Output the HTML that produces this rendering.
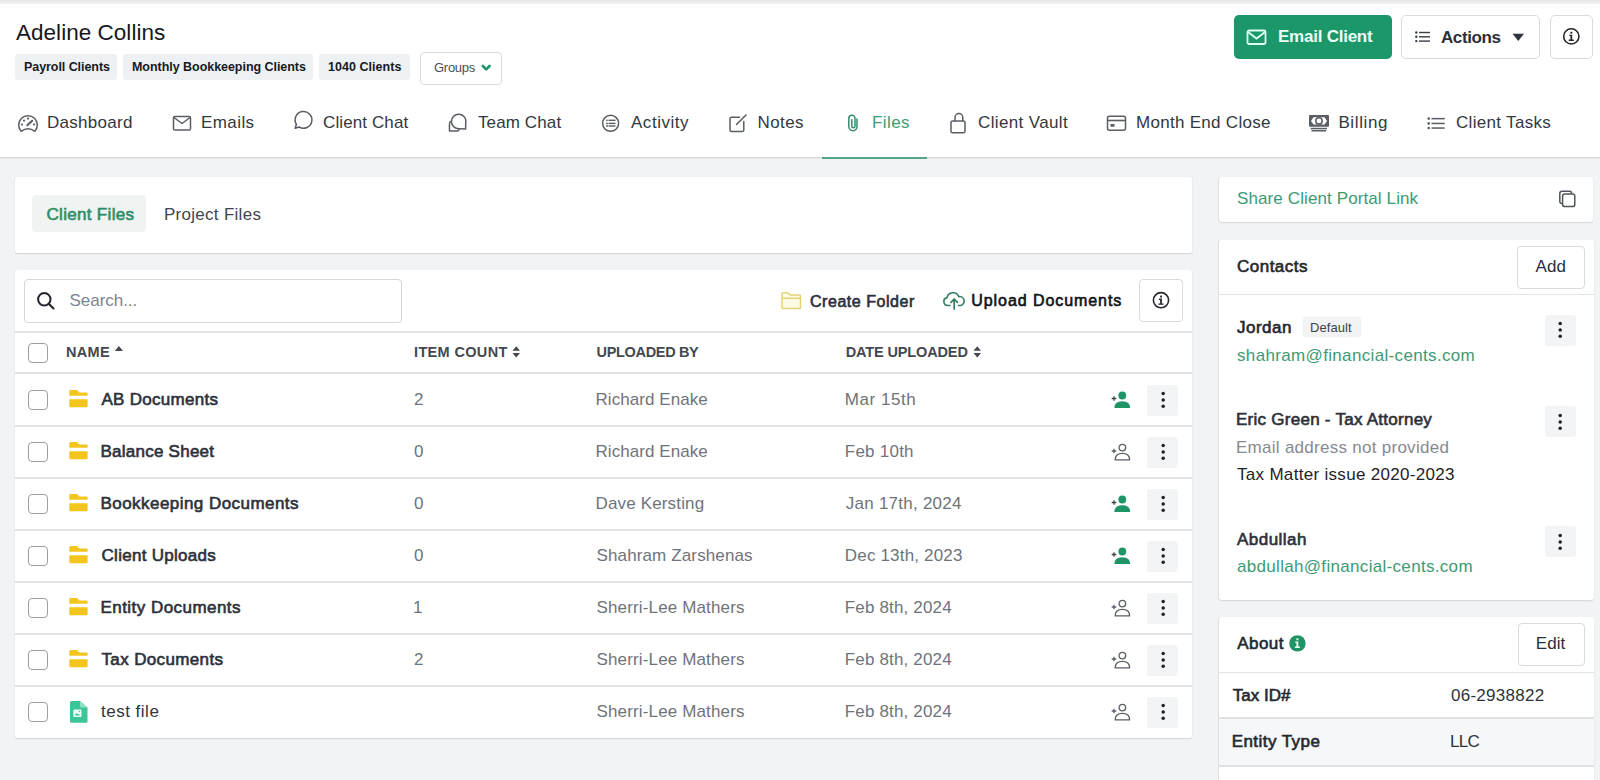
<!DOCTYPE html>
<html><head><meta charset="utf-8"><title>Files - Adeline Collins</title>
<style>
html,body{margin:0;padding:0;width:1600px;height:780px;overflow:hidden;background:#f1f2f4;font-family:"Liberation Sans", sans-serif;}
#root{position:relative;width:1600px;height:780px;overflow:hidden}
</style></head><body><div id="root">
<div style="position:absolute;left:0px;top:8px;width:1600px;height:149px;background:#fff"></div>
<div style="position:absolute;left:0px;top:0px;width:1600px;height:1px;background:#e5e5e5"></div>
<div style="position:absolute;left:0px;top:1px;width:1600px;height:1px;background:#eaeaea"></div>
<div style="position:absolute;left:0px;top:2px;width:1600px;height:1px;background:#eeeeee"></div>
<div style="position:absolute;left:0px;top:3px;width:1600px;height:1px;background:#f2f2f2"></div>
<div style="position:absolute;left:0px;top:4px;width:1600px;height:1px;background:#fcfcfc"></div>
<div style="position:absolute;left:0px;top:5px;width:1600px;height:1px;background:#fefefe"></div>
<div style="position:absolute;left:0px;top:6px;width:1600px;height:1px;background:#fafafa"></div>
<div style="position:absolute;left:0px;top:7px;width:1600px;height:1px;background:#fcfcfc"></div>
<div style="position:absolute;left:0px;top:157px;width:1600px;height:1px;background:#dadbde"></div>
<div style="position:absolute;left:0px;top:158px;width:1600px;height:1px;background:#e6e7ea"></div>
<div style="position:absolute;left:15px;top:54px;width:102px;height:26px;background:#eef1f4;border-radius:3px"></div>
<div style="position:absolute;left:123px;top:54px;width:190px;height:26px;background:#eef1f4;border-radius:3px"></div>
<div style="position:absolute;left:319px;top:54px;width:91px;height:26px;background:#eef1f4;border-radius:3px"></div>
<div style="position:absolute;left:420px;top:52px;width:82px;height:33px;background:#fff;border:1px solid #d9dbde;border-radius:4px;box-sizing:border-box"></div>
<svg style="position:absolute;left:481px;top:64px" width="11" height="8" viewBox="0 0 11 8"><path d="M1.9 2 L5.2 5.4 L8.5 2" fill="none" stroke="#21966a" stroke-width="2.7" stroke-linecap="round" stroke-linejoin="round"/></svg>
<div style="position:absolute;left:1234px;top:15px;width:158px;height:44px;background:#1b976a;border-radius:5px"></div>
<svg style="position:absolute;left:1246px;top:29px" width="21" height="17" viewBox="0 0 21 17"><rect x="1.5" y="1.5" width="18" height="13.5" rx="1.5" fill="none" stroke="#dffff0" stroke-width="1.8"/><path d="M2 3 L10.5 9.5 L19 3" fill="none" stroke="#dffff0" stroke-width="1.8"/></svg>
<div style="position:absolute;left:1401px;top:15px;width:139px;height:44px;background:#fff;border:1px solid #d8dadd;border-radius:5px;box-sizing:border-box"></div>
<svg style="position:absolute;left:1415px;top:31px" width="16" height="12" viewBox="0 0 16 12"><g fill="#3a3e46"><circle cx="1.3" cy="1.5" r="1.2"/><circle cx="1.3" cy="5.8" r="1.2"/><circle cx="1.3" cy="10.1" r="1.2"/><rect x="4" y="0.8" width="11" height="1.4"/><rect x="4" y="5.1" width="11" height="1.4"/><rect x="4" y="9.4" width="11" height="1.4"/></g></svg>
<svg style="position:absolute;left:1512px;top:33px" width="13" height="9" viewBox="0 0 13 9"><path d="M0.5 0.8 L12 0.8 L6.25 8 Z" fill="#2f333b"/></svg>
<div style="position:absolute;left:1550px;top:15px;width:43px;height:44px;background:#fff;border:1px solid #d8dadd;border-radius:5px;box-sizing:border-box"></div>
<svg style="position:absolute;left:1561px;top:26px" width="21" height="21" viewBox="0 0 21 21"><circle cx="10.3" cy="10.4" r="7.6" fill="none" stroke="#25282e" stroke-width="1.6"/><rect x="9.4" y="5.800000000000001" width="1.9" height="1.9" fill="#25282e"/><path d="M8.3 8.8 H11.200000000000001 V13.600000000000001 H12.9 V15.0 H7.700000000000001 V13.600000000000001 H9.4 V10.1 H8.3 Z" fill="#25282e"/></svg>
<div style="position:absolute;left:822px;top:156.5px;width:105px;height:2px;background:#52a884"></div>
<svg style="position:absolute;left:16px;top:113px" width="24" height="21" viewBox="0 0 24 21"><path d="M5.2 18.3 A9.3 9.3 0 1 1 18.8 18.3 Q12 13 5.2 18.3 Z" fill="none" stroke="#595d64" stroke-width="1.5" stroke-linecap="round" stroke-linejoin="round"/><g fill="#595d64"><circle cx="6" cy="11.5" r="1.1"/><circle cx="8" cy="7.6" r="1.1"/><circle cx="12" cy="5.6" r="1.1"/><circle cx="18.1" cy="11.5" r="1.1"/></g><path d="M11.3 12.3 L16.2 7.7" stroke="#595d64" stroke-width="2" stroke-linecap="round"/></svg>
<svg style="position:absolute;left:171px;top:114px" width="22" height="18" viewBox="0 0 22 18"><rect x="2.5" y="2.5" width="17" height="13.5" rx="1.3" fill="none" stroke="#595d64" stroke-width="1.5" stroke-linecap="round" stroke-linejoin="round"/><path d="M3 3.5 L11 9.5 L19 3.5" fill="none" stroke="#595d64" stroke-width="1.5" stroke-linecap="round" stroke-linejoin="round"/></svg>
<svg style="position:absolute;left:292px;top:109px" width="22" height="22" viewBox="0 0 22 22"><path d="M3.2 19.3 L4.4 15.3 A8.4 8.4 0 1 1 7.1 18 Z" fill="none" stroke="#595d64" stroke-width="1.5" stroke-linecap="round" stroke-linejoin="round"/></svg>
<svg style="position:absolute;left:446px;top:112px" width="24" height="22" viewBox="0 0 24 22"><path d="M13.97 16.69 A7.3 7.3 0 1 1 19.75 11.4 L19.6 16.9 Z" fill="none" stroke="#595d64" stroke-width="1.5" stroke-linecap="round" stroke-linejoin="round"/><path d="M4.4 9.4 Q3.3 11.2 3.4 13.6 L3.5 19.1 L11.4 19 Q12.4 18.8 12.9 17.6" fill="none" stroke="#595d64" stroke-width="1.5" stroke-linecap="round" stroke-linejoin="round"/></svg>
<svg style="position:absolute;left:600px;top:112px" width="22" height="22" viewBox="0 0 22 22"><circle cx="10.6" cy="11.3" r="8" fill="none" stroke="#595d64" stroke-width="1.5" stroke-linecap="round" stroke-linejoin="round"/><g fill="#595d64"><circle cx="7" cy="8.3" r="0.9"/><circle cx="7" cy="11.4" r="0.9"/><circle cx="7" cy="14" r="0.9"/><rect x="8.5" y="7.6" width="7" height="1.4"/><rect x="8.5" y="10.7" width="7" height="1.4"/><rect x="8.5" y="13.3" width="7" height="1.4"/></g></svg>
<svg style="position:absolute;left:727px;top:112px" width="22" height="22" viewBox="0 0 22 22"><path d="M12.5 5.2 H4.5 A1.5 1.5 0 0 0 3 6.7 V18 A1.5 1.5 0 0 0 4.5 19.5 H15.3 A1.5 1.5 0 0 0 16.8 18 V9.5" fill="none" stroke="#595d64" stroke-width="1.5" stroke-linecap="round" stroke-linejoin="round"/><path d="M9.5 12.5 L19 3" fill="none" stroke="#595d64" stroke-width="1.5" stroke-linecap="round" stroke-linejoin="round"/></svg>
<svg style="position:absolute;left:845px;top:113px" width="16" height="20" viewBox="0 0 16 20"><path d="M12 6 V13.6 A4.1 4.1 0 0 1 3.8 13.6 V5.4 A3.1 3.1 0 0 1 10 5.4 V13.2 A1.6 1.6 0 0 1 6.8 13.2 V6.6" fill="none" stroke="#2f8a65" stroke-width="1.45" stroke-linecap="round"/></svg>
<svg style="position:absolute;left:948px;top:111px" width="20" height="24" viewBox="0 0 20 24"><path d="M7 9.5 V6.5 A3.9 3.9 0 0 1 14.8 6.5 V9.5" fill="none" stroke="#595d64" stroke-width="1.5" stroke-linecap="round" stroke-linejoin="round"/><rect x="3" y="10" width="14" height="11.8" rx="1.6" fill="none" stroke="#595d64" stroke-width="1.5" stroke-linecap="round" stroke-linejoin="round"/></svg>
<svg style="position:absolute;left:1105px;top:114px" width="23" height="19" viewBox="0 0 23 19"><rect x="2.5" y="2.3" width="18" height="14" rx="2" fill="none" stroke="#595d64" stroke-width="1.5" stroke-linecap="round" stroke-linejoin="round"/><path d="M2.8 6.5 H20.2" stroke="#595d64" stroke-width="1.6"/><rect x="5.5" y="10" width="4" height="2.8" rx="0.6" fill="#595d64"/></svg>
<svg style="position:absolute;left:1307px;top:113px" width="24" height="21" viewBox="0 0 24 21"><rect x="2" y="2" width="20" height="11.8" rx="1" fill="#595d64"/><path d="M6.5 4.2 H17.5 L20 7.9 L17.5 11.6 H6.5 L4 7.9 Z" fill="#fff"/><circle cx="12" cy="7.9" r="3.2" fill="none" stroke="#595d64" stroke-width="1.5"/><rect x="3.7" y="14.8" width="16.3" height="1.5" fill="#595d64"/><rect x="4.5" y="17" width="14.7" height="1.5" fill="#595d64"/></svg>
<svg style="position:absolute;left:1425px;top:115px" width="22" height="16" viewBox="0 0 22 16"><g fill="#595d64"><circle cx="3.7" cy="3.6" r="1.3"/><circle cx="3.7" cy="8.4" r="1.3"/><circle cx="3.7" cy="13" r="1.3"/><rect x="6.5" y="2.9" width="13.2" height="1.5"/><rect x="6.5" y="7.7" width="13.2" height="1.5"/><rect x="6.5" y="12.3" width="13.2" height="1.5"/></g></svg>
<div style="position:absolute;left:0px;top:159px;width:1600px;height:621px;background:#f2f3f5"></div>
<div style="position:absolute;left:15px;top:177px;width:1177px;height:76px;background:#fff;border-radius:2px;box-shadow:0 1px 1.5px rgba(0,0,0,0.13),0 0 1px rgba(0,0,0,0.06)"></div>
<div style="position:absolute;left:32px;top:195px;width:114px;height:37px;background:#eff3f1;border-radius:4px"></div>
<div style="position:absolute;left:15px;top:270px;width:1177px;height:468px;background:#fff;border-radius:2px;box-shadow:0 1px 1.5px rgba(0,0,0,0.13),0 0 1px rgba(0,0,0,0.06)"></div>
<div style="position:absolute;left:24px;top:279px;width:378px;height:44px;background:#fff;border:1px solid #d4d6da;border-radius:4px;box-sizing:border-box"></div>
<svg style="position:absolute;left:35px;top:290px" width="22" height="22" viewBox="0 0 22 22"><circle cx="9.3" cy="9.3" r="6.2" fill="none" stroke="#22252b" stroke-width="2"/><path d="M13.8 13.8 L18.5 18.5" stroke="#22252b" stroke-width="2.1" stroke-linecap="round"/></svg>
<svg style="position:absolute;left:779px;top:290px" width="24" height="21" viewBox="0 0 24 21"><path d="M3 4 Q3 2.8 4.2 2.8 L8.5 2.8 L11.5 5 L20.5 5 Q21.5 5 21.5 6 L21.5 17.5 Q21.5 18.6 20.5 18.6 L4 18.6 Q3 18.6 3 17.5 Z" fill="#fdfbe6" stroke="#e3d377" stroke-width="1.5"/><path d="M3.2 8.2 L21.3 8.2" stroke="#e3d377" stroke-width="1.5"/></svg>
<svg style="position:absolute;left:941px;top:289px" width="26" height="22" viewBox="0 0 26 22"><path d="M9 16.5 H7 A4 4 0 0 1 6 8.6 A6.2 6.2 0 0 1 17.8 7.6 A4.5 4.5 0 0 1 19.5 16.5 H17.5" fill="none" stroke="#2f7d5d" stroke-width="1.6" stroke-linecap="round" stroke-linejoin="round"/><path d="M13.2 20 V10.2 M10 13.3 L13.2 10 L16.4 13.3" fill="none" stroke="#2f7d5d" stroke-width="1.7" stroke-linecap="round" stroke-linejoin="round"/></svg>
<div style="position:absolute;left:1139px;top:279px;width:44px;height:43px;background:#fff;border:1px solid #d8dadd;border-radius:4px;box-sizing:border-box"></div>
<svg style="position:absolute;left:1151px;top:290px" width="21" height="21" viewBox="0 0 21 21"><circle cx="10" cy="10.2" r="7.6" fill="none" stroke="#25282e" stroke-width="1.6"/><rect x="9.1" y="5.6" width="1.9" height="1.9" fill="#25282e"/><path d="M8 8.6 H10.9 V13.399999999999999 H12.6 V14.799999999999999 H7.4 V13.399999999999999 H9.1 V9.899999999999999 H8 Z" fill="#25282e"/></svg>
<div style="position:absolute;left:15px;top:331px;width:1177px;height:2px;background:#e2e3e6"></div>
<div style="position:absolute;left:28px;top:343px;width:20px;height:20px;background:#fff;border:1.2px solid #9a9ea4;border-radius:4px;box-sizing:border-box"></div>
<div style="position:absolute;left:15px;top:372px;width:1177px;height:2px;background:#e2e3e5"></div>
<svg style="position:absolute;left:114px;top:345px" width="10" height="7" viewBox="0 0 10 7"><path d="M0.8 6 L4.9 1 L9 6 Z" fill="#44484f"/></svg>
<svg style="position:absolute;left:512.3px;top:345.8px" width="9" height="12" viewBox="0 0 9 12"><path d="M0.5 4.8 L4.25 0.3 L8 4.8 Z M0.5 7 L4.25 11.5 L8 7 Z" fill="#44484f"/></svg>
<svg style="position:absolute;left:973.3px;top:345.8px" width="9" height="12" viewBox="0 0 9 12"><path d="M0.5 4.8 L4.25 0.3 L8 4.8 Z M0.5 7 L4.25 11.5 L8 7 Z" fill="#44484f"/></svg>
<div style="position:absolute;left:15px;top:425px;width:1177px;height:2px;background:#e2e3e5"></div>
<div style="position:absolute;left:28px;top:390px;width:20px;height:20px;background:#fff;border:1.2px solid #9a9ea4;border-radius:4px;box-sizing:border-box"></div>
<svg style="position:absolute;left:69px;top:390px" width="19" height="18" viewBox="0 0 19 18"><path d="M0.3 1.2 Q0.3 0 1.5 0 L8 0 L10.3 2.5 L17.7 2.5 Q18.6 2.5 18.6 3.4 L18.6 5.8 L0.3 5.8 Z" fill="#f4c51c"/><path d="M0.3 9.3 L18.6 9.3 L18.6 16.2 Q18.6 17.2 17.6 17.2 L1.3 17.2 Q0.3 17.2 0.3 16.2 Z" fill="#f4c51c"/></svg>
<svg style="position:absolute;left:1110px;top:390px" width="24" height="20" viewBox="0 0 24 20"><g transform="translate(4,0)"><circle cx="8.3" cy="5.5" r="3.9" fill="#1f9466"/><path d="M0.3 18.1 Q0.3 11.2 8.3 11.2 Q16.2 11.2 16.2 18.1 Z" fill="#1f9466"/><path d="M-2.3 8.5 H2.3 M0 6.2 V10.8" stroke="#3e4a45" stroke-width="1.3"/></g></svg>
<div style="position:absolute;left:1147.0px;top:384.5px;width:31px;height:31px;background:#f3f4f5;border-radius:3px"></div>
<svg style="position:absolute;left:1146.5px;top:384px" width="32" height="32" viewBox="0 0 32 32"><g fill="#1f2226"><circle cx="16.2" cy="9.6" r="1.75"/><circle cx="16.2" cy="15.9" r="1.75"/><circle cx="16.2" cy="22.2" r="1.75"/></g></svg>
<div style="position:absolute;left:15px;top:477px;width:1177px;height:2px;background:#e2e3e5"></div>
<div style="position:absolute;left:28px;top:442px;width:20px;height:20px;background:#fff;border:1.2px solid #9a9ea4;border-radius:4px;box-sizing:border-box"></div>
<svg style="position:absolute;left:69px;top:442px" width="19" height="18" viewBox="0 0 19 18"><path d="M0.3 1.2 Q0.3 0 1.5 0 L8 0 L10.3 2.5 L17.7 2.5 Q18.6 2.5 18.6 3.4 L18.6 5.8 L0.3 5.8 Z" fill="#f4c51c"/><path d="M0.3 9.3 L18.6 9.3 L18.6 16.2 Q18.6 17.2 17.6 17.2 L1.3 17.2 Q0.3 17.2 0.3 16.2 Z" fill="#f4c51c"/></svg>
<svg style="position:absolute;left:1110px;top:442px" width="24" height="20" viewBox="0 0 24 20"><g transform="translate(4,0.5)"><circle cx="8.4" cy="5.1" r="3.3" fill="none" stroke="#5a5e66" stroke-width="1.3"/><path d="M1.2 17.4 Q1.2 10.9 8.4 10.9 Q15.6 10.9 15.6 17.4 Z" fill="none" stroke="#5a5e66" stroke-width="1.3" stroke-linejoin="round"/><path d="M-2.3 8.5 H2.3 M0 6.2 V10.8" stroke="#5a5e66" stroke-width="1.3"/></g></svg>
<div style="position:absolute;left:1147.0px;top:436.5px;width:31px;height:31px;background:#f3f4f5;border-radius:3px"></div>
<svg style="position:absolute;left:1146.5px;top:436px" width="32" height="32" viewBox="0 0 32 32"><g fill="#1f2226"><circle cx="16.2" cy="9.6" r="1.75"/><circle cx="16.2" cy="15.9" r="1.75"/><circle cx="16.2" cy="22.2" r="1.75"/></g></svg>
<div style="position:absolute;left:15px;top:529px;width:1177px;height:2px;background:#e2e3e5"></div>
<div style="position:absolute;left:28px;top:494px;width:20px;height:20px;background:#fff;border:1.2px solid #9a9ea4;border-radius:4px;box-sizing:border-box"></div>
<svg style="position:absolute;left:69px;top:494px" width="19" height="18" viewBox="0 0 19 18"><path d="M0.3 1.2 Q0.3 0 1.5 0 L8 0 L10.3 2.5 L17.7 2.5 Q18.6 2.5 18.6 3.4 L18.6 5.8 L0.3 5.8 Z" fill="#f4c51c"/><path d="M0.3 9.3 L18.6 9.3 L18.6 16.2 Q18.6 17.2 17.6 17.2 L1.3 17.2 Q0.3 17.2 0.3 16.2 Z" fill="#f4c51c"/></svg>
<svg style="position:absolute;left:1110px;top:494px" width="24" height="20" viewBox="0 0 24 20"><g transform="translate(4,0)"><circle cx="8.3" cy="5.5" r="3.9" fill="#1f9466"/><path d="M0.3 18.1 Q0.3 11.2 8.3 11.2 Q16.2 11.2 16.2 18.1 Z" fill="#1f9466"/><path d="M-2.3 8.5 H2.3 M0 6.2 V10.8" stroke="#3e4a45" stroke-width="1.3"/></g></svg>
<div style="position:absolute;left:1147.0px;top:488.5px;width:31px;height:31px;background:#f3f4f5;border-radius:3px"></div>
<svg style="position:absolute;left:1146.5px;top:488px" width="32" height="32" viewBox="0 0 32 32"><g fill="#1f2226"><circle cx="16.2" cy="9.6" r="1.75"/><circle cx="16.2" cy="15.9" r="1.75"/><circle cx="16.2" cy="22.2" r="1.75"/></g></svg>
<div style="position:absolute;left:15px;top:581px;width:1177px;height:2px;background:#e2e3e5"></div>
<div style="position:absolute;left:28px;top:546px;width:20px;height:20px;background:#fff;border:1.2px solid #9a9ea4;border-radius:4px;box-sizing:border-box"></div>
<svg style="position:absolute;left:69px;top:546px" width="19" height="18" viewBox="0 0 19 18"><path d="M0.3 1.2 Q0.3 0 1.5 0 L8 0 L10.3 2.5 L17.7 2.5 Q18.6 2.5 18.6 3.4 L18.6 5.8 L0.3 5.8 Z" fill="#f4c51c"/><path d="M0.3 9.3 L18.6 9.3 L18.6 16.2 Q18.6 17.2 17.6 17.2 L1.3 17.2 Q0.3 17.2 0.3 16.2 Z" fill="#f4c51c"/></svg>
<svg style="position:absolute;left:1110px;top:546px" width="24" height="20" viewBox="0 0 24 20"><g transform="translate(4,0)"><circle cx="8.3" cy="5.5" r="3.9" fill="#1f9466"/><path d="M0.3 18.1 Q0.3 11.2 8.3 11.2 Q16.2 11.2 16.2 18.1 Z" fill="#1f9466"/><path d="M-2.3 8.5 H2.3 M0 6.2 V10.8" stroke="#3e4a45" stroke-width="1.3"/></g></svg>
<div style="position:absolute;left:1147.0px;top:540.5px;width:31px;height:31px;background:#f3f4f5;border-radius:3px"></div>
<svg style="position:absolute;left:1146.5px;top:540px" width="32" height="32" viewBox="0 0 32 32"><g fill="#1f2226"><circle cx="16.2" cy="9.6" r="1.75"/><circle cx="16.2" cy="15.9" r="1.75"/><circle cx="16.2" cy="22.2" r="1.75"/></g></svg>
<div style="position:absolute;left:15px;top:633px;width:1177px;height:2px;background:#e2e3e5"></div>
<div style="position:absolute;left:28px;top:598px;width:20px;height:20px;background:#fff;border:1.2px solid #9a9ea4;border-radius:4px;box-sizing:border-box"></div>
<svg style="position:absolute;left:69px;top:598px" width="19" height="18" viewBox="0 0 19 18"><path d="M0.3 1.2 Q0.3 0 1.5 0 L8 0 L10.3 2.5 L17.7 2.5 Q18.6 2.5 18.6 3.4 L18.6 5.8 L0.3 5.8 Z" fill="#f4c51c"/><path d="M0.3 9.3 L18.6 9.3 L18.6 16.2 Q18.6 17.2 17.6 17.2 L1.3 17.2 Q0.3 17.2 0.3 16.2 Z" fill="#f4c51c"/></svg>
<svg style="position:absolute;left:1110px;top:598px" width="24" height="20" viewBox="0 0 24 20"><g transform="translate(4,0.5)"><circle cx="8.4" cy="5.1" r="3.3" fill="none" stroke="#5a5e66" stroke-width="1.3"/><path d="M1.2 17.4 Q1.2 10.9 8.4 10.9 Q15.6 10.9 15.6 17.4 Z" fill="none" stroke="#5a5e66" stroke-width="1.3" stroke-linejoin="round"/><path d="M-2.3 8.5 H2.3 M0 6.2 V10.8" stroke="#5a5e66" stroke-width="1.3"/></g></svg>
<div style="position:absolute;left:1147.0px;top:592.5px;width:31px;height:31px;background:#f3f4f5;border-radius:3px"></div>
<svg style="position:absolute;left:1146.5px;top:592px" width="32" height="32" viewBox="0 0 32 32"><g fill="#1f2226"><circle cx="16.2" cy="9.6" r="1.75"/><circle cx="16.2" cy="15.9" r="1.75"/><circle cx="16.2" cy="22.2" r="1.75"/></g></svg>
<div style="position:absolute;left:15px;top:685px;width:1177px;height:2px;background:#e2e3e5"></div>
<div style="position:absolute;left:28px;top:650px;width:20px;height:20px;background:#fff;border:1.2px solid #9a9ea4;border-radius:4px;box-sizing:border-box"></div>
<svg style="position:absolute;left:69px;top:650px" width="19" height="18" viewBox="0 0 19 18"><path d="M0.3 1.2 Q0.3 0 1.5 0 L8 0 L10.3 2.5 L17.7 2.5 Q18.6 2.5 18.6 3.4 L18.6 5.8 L0.3 5.8 Z" fill="#f4c51c"/><path d="M0.3 9.3 L18.6 9.3 L18.6 16.2 Q18.6 17.2 17.6 17.2 L1.3 17.2 Q0.3 17.2 0.3 16.2 Z" fill="#f4c51c"/></svg>
<svg style="position:absolute;left:1110px;top:650px" width="24" height="20" viewBox="0 0 24 20"><g transform="translate(4,0.5)"><circle cx="8.4" cy="5.1" r="3.3" fill="none" stroke="#5a5e66" stroke-width="1.3"/><path d="M1.2 17.4 Q1.2 10.9 8.4 10.9 Q15.6 10.9 15.6 17.4 Z" fill="none" stroke="#5a5e66" stroke-width="1.3" stroke-linejoin="round"/><path d="M-2.3 8.5 H2.3 M0 6.2 V10.8" stroke="#5a5e66" stroke-width="1.3"/></g></svg>
<div style="position:absolute;left:1147.0px;top:644.5px;width:31px;height:31px;background:#f3f4f5;border-radius:3px"></div>
<svg style="position:absolute;left:1146.5px;top:644px" width="32" height="32" viewBox="0 0 32 32"><g fill="#1f2226"><circle cx="16.2" cy="9.6" r="1.75"/><circle cx="16.2" cy="15.9" r="1.75"/><circle cx="16.2" cy="22.2" r="1.75"/></g></svg>
<div style="position:absolute;left:28px;top:702px;width:20px;height:20px;background:#fff;border:1.2px solid #9a9ea4;border-radius:4px;box-sizing:border-box"></div>
<svg style="position:absolute;left:70.3px;top:701px" width="18" height="22" viewBox="0 0 18 22"><path d="M1.5 0 L10 0 L17.5 6.5 L17.5 20.3 Q17.5 21.8 16 21.8 L1.5 21.8 Q0 21.8 0 20.3 L0 1.5 Q0 0 1.5 0 Z" fill="#3cc597"/><path d="M10 0 L10 5 Q10 6.5 11.5 6.5 L17.5 6.5 Z" fill="#8fe3c4"/><rect x="3.3" y="8.6" width="8.2" height="7.4" rx="0.8" fill="#e8fff6"/><path d="M4.8 14.5 L6.5 12 L7.8 13.5 L8.8 12.8 L10 14.5 Z" fill="#3cc597"/><circle cx="9.6" cy="10.4" r="0.7" fill="#3cc597"/></svg>
<svg style="position:absolute;left:1110px;top:702px" width="24" height="20" viewBox="0 0 24 20"><g transform="translate(4,0.5)"><circle cx="8.4" cy="5.1" r="3.3" fill="none" stroke="#5a5e66" stroke-width="1.3"/><path d="M1.2 17.4 Q1.2 10.9 8.4 10.9 Q15.6 10.9 15.6 17.4 Z" fill="none" stroke="#5a5e66" stroke-width="1.3" stroke-linejoin="round"/><path d="M-2.3 8.5 H2.3 M0 6.2 V10.8" stroke="#5a5e66" stroke-width="1.3"/></g></svg>
<div style="position:absolute;left:1147.0px;top:696.5px;width:31px;height:31px;background:#f3f4f5;border-radius:3px"></div>
<svg style="position:absolute;left:1146.5px;top:696px" width="32" height="32" viewBox="0 0 32 32"><g fill="#1f2226"><circle cx="16.2" cy="9.6" r="1.75"/><circle cx="16.2" cy="15.9" r="1.75"/><circle cx="16.2" cy="22.2" r="1.75"/></g></svg>
<div style="position:absolute;left:1219px;top:177px;width:374px;height:45px;background:#fff;border-radius:3px;box-shadow:0 1px 1.5px rgba(0,0,0,0.12),-1px 0 0 #e4e5e8"></div>
<svg style="position:absolute;left:1557px;top:189px" width="20" height="20" viewBox="0 0 20 20"><path d="M5 14.5 Q2.8 14.5 2.8 12.3 V4.5 Q2.8 2.3 5 2.3 H12.6 Q14.5 2.3 14.8 4.6" fill="none" stroke="#50545b" stroke-width="1.5"/><rect x="5.6" y="5" width="12.2" height="12.6" rx="2.2" fill="none" stroke="#50545b" stroke-width="1.5"/></svg>
<div style="position:absolute;left:1219px;top:240px;width:375px;height:360px;background:#fff;border-radius:3px;box-shadow:0 1px 1.5px rgba(0,0,0,0.12),-1px 0 0 #e4e5e8"></div>
<div style="position:absolute;left:1517px;top:246px;width:68px;height:43px;background:#fff;border:1px solid #d8dadd;border-radius:4px;box-sizing:border-box"></div>
<div style="position:absolute;left:1219px;top:293.5px;width:375px;height:1.5px;background:#e3e4e7"></div>
<div style="position:absolute;left:1302.5px;top:316.5px;width:58.5px;height:20.5px;background:#f2f3f4;border-radius:4px;box-shadow:0 0 1.5px rgba(0,0,0,0.08)"></div>
<div style="position:absolute;left:1544.5px;top:314.5px;width:31px;height:31px;background:#f3f4f5;border-radius:3px"></div>
<svg style="position:absolute;left:1544px;top:314px" width="32" height="32" viewBox="0 0 32 32"><g fill="#1f2226"><circle cx="16.2" cy="9.6" r="1.75"/><circle cx="16.2" cy="15.9" r="1.75"/><circle cx="16.2" cy="22.2" r="1.75"/></g></svg>
<div style="position:absolute;left:1544.5px;top:406.0px;width:31px;height:31px;background:#f3f4f5;border-radius:3px"></div>
<svg style="position:absolute;left:1544px;top:405.5px" width="32" height="32" viewBox="0 0 32 32"><g fill="#1f2226"><circle cx="16.2" cy="9.6" r="1.75"/><circle cx="16.2" cy="15.9" r="1.75"/><circle cx="16.2" cy="22.2" r="1.75"/></g></svg>
<div style="position:absolute;left:1544.5px;top:526.0px;width:31px;height:31px;background:#f3f4f5;border-radius:3px"></div>
<svg style="position:absolute;left:1544px;top:525.5px" width="32" height="32" viewBox="0 0 32 32"><g fill="#1f2226"><circle cx="16.2" cy="9.6" r="1.75"/><circle cx="16.2" cy="15.9" r="1.75"/><circle cx="16.2" cy="22.2" r="1.75"/></g></svg>
<div style="position:absolute;left:1219px;top:617px;width:375px;height:175px;background:#fff;border-radius:3px;box-shadow:0 1px 1.5px rgba(0,0,0,0.12),-1px 0 0 #e4e5e8"></div>
<svg style="position:absolute;left:1287px;top:633px" width="21" height="21" viewBox="0 0 21 21"><circle cx="10.4" cy="10.4" r="8.2" fill="#1f9466"/><rect x="9.5" y="5.3" width="1.9" height="1.9" fill="#e6fff3"/><path d="M8.3 8.6 H11.3 V13.6 H12.9 V15 H7.8 V13.6 H9.4 V9.9 H8.3 Z" fill="#e6fff3"/></svg>
<div style="position:absolute;left:1518px;top:622.5px;width:67px;height:43px;background:#fff;border:1px solid #d8dadd;border-radius:4px;box-sizing:border-box"></div>
<div style="position:absolute;left:1219px;top:671.5px;width:375px;height:1.5px;background:#e3e4e7"></div>
<div style="position:absolute;left:1219px;top:717px;width:375px;height:2px;background:#e0e1e4"></div>
<div style="position:absolute;left:1219px;top:719px;width:375px;height:46px;background:#f6f7f9"></div>
<div style="position:absolute;left:1219px;top:765px;width:375px;height:2px;background:#e0e1e4"></div>
<div style="position:absolute;left:16px;top:22.45px;font-size:22.5px;line-height:22.5px;font-weight:400;color:#16181d;letter-spacing:0.030px;white-space:nowrap;">Adeline Collins</div>
<div style="position:absolute;left:24px;top:61.22px;font-size:12.5px;line-height:12.5px;font-weight:700;color:#17191e;letter-spacing:-0.063px;white-space:nowrap;">Payroll Clients</div>
<div style="position:absolute;left:132px;top:61.22px;font-size:12.5px;line-height:12.5px;font-weight:700;color:#17191e;letter-spacing:-0.041px;white-space:nowrap;">Monthly Bookkeeping Clients</div>
<div style="position:absolute;left:328px;top:61.22px;font-size:12.5px;line-height:12.5px;font-weight:700;color:#17191e;letter-spacing:0.045px;white-space:nowrap;">1040 Clients</div>
<div style="position:absolute;left:434px;top:61.30px;font-size:13px;line-height:13px;font-weight:400;color:#4a4e56;letter-spacing:-0.266px;white-space:nowrap;">Groups</div>
<div style="position:absolute;left:1278px;top:28.31px;font-size:17px;line-height:17px;font-weight:700;color:#e9fff5;letter-spacing:-0.240px;white-space:nowrap;">Email Client</div>
<div style="position:absolute;left:1441px;top:28.91px;font-size:17px;line-height:17px;font-weight:700;color:#2b2f38;letter-spacing:-0.414px;white-space:nowrap;">Actions</div>
<div style="position:absolute;left:47px;top:114.11px;font-size:17px;line-height:17px;font-weight:400;color:#33373f;letter-spacing:0.286px;white-space:nowrap;">Dashboard</div>
<div style="position:absolute;left:201px;top:114.11px;font-size:17px;line-height:17px;font-weight:400;color:#33373f;letter-spacing:0.418px;white-space:nowrap;">Emails</div>
<div style="position:absolute;left:323px;top:114.11px;font-size:17px;line-height:17px;font-weight:400;color:#33373f;letter-spacing:0.113px;white-space:nowrap;">Client Chat</div>
<div style="position:absolute;left:478px;top:114.11px;font-size:17px;line-height:17px;font-weight:400;color:#33373f;letter-spacing:0.115px;white-space:nowrap;">Team Chat</div>
<div style="position:absolute;left:631px;top:114.11px;font-size:17px;line-height:17px;font-weight:400;color:#33373f;letter-spacing:0.523px;white-space:nowrap;">Activity</div>
<div style="position:absolute;left:757.5px;top:114.11px;font-size:17px;line-height:17px;font-weight:400;color:#33373f;letter-spacing:0.398px;white-space:nowrap;">Notes</div>
<div style="position:absolute;left:872px;top:114.11px;font-size:17px;line-height:17px;font-weight:400;color:#3a9e78;letter-spacing:0.402px;white-space:nowrap;">Files</div>
<div style="position:absolute;left:978px;top:114.11px;font-size:17px;line-height:17px;font-weight:400;color:#33373f;letter-spacing:0.368px;white-space:nowrap;">Client Vault</div>
<div style="position:absolute;left:1136px;top:114.11px;font-size:17px;line-height:17px;font-weight:400;color:#33373f;letter-spacing:0.289px;white-space:nowrap;">Month End Close</div>
<div style="position:absolute;left:1338.4px;top:114.11px;font-size:17px;line-height:17px;font-weight:400;color:#33373f;letter-spacing:0.617px;white-space:nowrap;">Billing</div>
<div style="position:absolute;left:1456px;top:114.11px;font-size:17px;line-height:17px;font-weight:400;color:#33373f;letter-spacing:0.314px;white-space:nowrap;">Client Tasks</div>
<div style="position:absolute;left:46.5px;top:205.61px;font-size:17px;line-height:17px;font-weight:400;color:#2e8e66;letter-spacing:0.311px;white-space:nowrap;-webkit-text-stroke:0.62px #2e8e66;">Client Files</div>
<div style="position:absolute;left:164px;top:205.61px;font-size:17px;line-height:17px;font-weight:400;color:#41454d;letter-spacing:0.281px;white-space:nowrap;">Project Files</div>
<div style="position:absolute;left:69.5px;top:292.01px;font-size:17px;line-height:17px;font-weight:400;color:#80848b;letter-spacing:-0.039px;white-space:nowrap;">Search...</div>
<div style="position:absolute;left:810px;top:293.86px;font-size:16px;line-height:16px;font-weight:400;color:#2b2f38;letter-spacing:0.542px;white-space:nowrap;-webkit-text-stroke:0.62px #2b2f38;">Create Folder</div>
<div style="position:absolute;left:971.3px;top:292.86px;font-size:16px;line-height:16px;font-weight:400;color:#121418;letter-spacing:0.929px;white-space:nowrap;-webkit-text-stroke:0.62px #121418;">Upload Documents</div>
<div style="position:absolute;left:66px;top:344.73px;font-size:14.5px;line-height:14.5px;font-weight:700;color:#44484f;letter-spacing:0.326px;white-space:nowrap;">NAME</div>
<div style="position:absolute;left:414px;top:344.73px;font-size:14.5px;line-height:14.5px;font-weight:700;color:#44484f;letter-spacing:0.349px;white-space:nowrap;">ITEM COUNT</div>
<div style="position:absolute;left:596.6px;top:344.73px;font-size:14.5px;line-height:14.5px;font-weight:700;color:#44484f;letter-spacing:-0.336px;white-space:nowrap;">UPLOADED BY</div>
<div style="position:absolute;left:845.7px;top:344.73px;font-size:14.5px;line-height:14.5px;font-weight:700;color:#44484f;letter-spacing:-0.135px;white-space:nowrap;">DATE UPLOADED</div>
<div style="position:absolute;left:101.5px;top:390.81px;font-size:17px;line-height:17px;font-weight:400;color:#2d313a;letter-spacing:0.284px;white-space:nowrap;-webkit-text-stroke:0.62px #2d313a;">AB Documents</div>
<div style="position:absolute;left:414px;top:390.81px;font-size:17px;line-height:17px;font-weight:400;color:#6f737a;letter-spacing:0.000px;white-space:nowrap;">2</div>
<div style="position:absolute;left:595.5px;top:390.81px;font-size:17px;line-height:17px;font-weight:400;color:#6f737a;letter-spacing:0.063px;white-space:nowrap;">Richard Enake</div>
<div style="position:absolute;left:844.8px;top:390.81px;font-size:17px;line-height:17px;font-weight:400;color:#6f737a;letter-spacing:0.553px;white-space:nowrap;">Mar 15th</div>
<div style="position:absolute;left:100.5px;top:442.81px;font-size:17px;line-height:17px;font-weight:400;color:#2d313a;letter-spacing:0.245px;white-space:nowrap;-webkit-text-stroke:0.62px #2d313a;">Balance Sheet</div>
<div style="position:absolute;left:414px;top:442.81px;font-size:17px;line-height:17px;font-weight:400;color:#6f737a;letter-spacing:0.000px;white-space:nowrap;">0</div>
<div style="position:absolute;left:595.5px;top:442.81px;font-size:17px;line-height:17px;font-weight:400;color:#6f737a;letter-spacing:0.063px;white-space:nowrap;">Richard Enake</div>
<div style="position:absolute;left:844.8px;top:442.81px;font-size:17px;line-height:17px;font-weight:400;color:#6f737a;letter-spacing:0.236px;white-space:nowrap;">Feb 10th</div>
<div style="position:absolute;left:100.5px;top:494.81px;font-size:17px;line-height:17px;font-weight:400;color:#2d313a;letter-spacing:0.450px;white-space:nowrap;-webkit-text-stroke:0.62px #2d313a;">Bookkeeping Documents</div>
<div style="position:absolute;left:414px;top:494.81px;font-size:17px;line-height:17px;font-weight:400;color:#6f737a;letter-spacing:0.000px;white-space:nowrap;">0</div>
<div style="position:absolute;left:595.5px;top:494.81px;font-size:17px;line-height:17px;font-weight:400;color:#6f737a;letter-spacing:0.157px;white-space:nowrap;">Dave Kersting</div>
<div style="position:absolute;left:845.8px;top:494.81px;font-size:17px;line-height:17px;font-weight:400;color:#6f737a;letter-spacing:0.244px;white-space:nowrap;">Jan 17th, 2024</div>
<div style="position:absolute;left:101.5px;top:546.81px;font-size:17px;line-height:17px;font-weight:400;color:#2d313a;letter-spacing:0.288px;white-space:nowrap;-webkit-text-stroke:0.62px #2d313a;">Client Uploads</div>
<div style="position:absolute;left:414px;top:546.81px;font-size:17px;line-height:17px;font-weight:400;color:#6f737a;letter-spacing:0.000px;white-space:nowrap;">0</div>
<div style="position:absolute;left:596.5px;top:546.81px;font-size:17px;line-height:17px;font-weight:400;color:#6f737a;letter-spacing:0.130px;white-space:nowrap;">Shahram Zarshenas</div>
<div style="position:absolute;left:844.8px;top:546.81px;font-size:17px;line-height:17px;font-weight:400;color:#6f737a;letter-spacing:0.181px;white-space:nowrap;">Dec 13th, 2023</div>
<div style="position:absolute;left:100.5px;top:598.81px;font-size:17px;line-height:17px;font-weight:400;color:#2d313a;letter-spacing:0.452px;white-space:nowrap;-webkit-text-stroke:0.62px #2d313a;">Entity Documents</div>
<div style="position:absolute;left:413px;top:598.81px;font-size:17px;line-height:17px;font-weight:400;color:#6f737a;letter-spacing:0.000px;white-space:nowrap;">1</div>
<div style="position:absolute;left:596.5px;top:598.81px;font-size:17px;line-height:17px;font-weight:400;color:#6f737a;letter-spacing:0.147px;white-space:nowrap;">Sherri-Lee Mathers</div>
<div style="position:absolute;left:844.8px;top:598.81px;font-size:17px;line-height:17px;font-weight:400;color:#6f737a;letter-spacing:0.162px;white-space:nowrap;">Feb 8th, 2024</div>
<div style="position:absolute;left:101.5px;top:650.81px;font-size:17px;line-height:17px;font-weight:400;color:#2d313a;letter-spacing:0.362px;white-space:nowrap;-webkit-text-stroke:0.62px #2d313a;">Tax Documents</div>
<div style="position:absolute;left:414px;top:650.81px;font-size:17px;line-height:17px;font-weight:400;color:#6f737a;letter-spacing:0.000px;white-space:nowrap;">2</div>
<div style="position:absolute;left:596.5px;top:650.81px;font-size:17px;line-height:17px;font-weight:400;color:#6f737a;letter-spacing:0.147px;white-space:nowrap;">Sherri-Lee Mathers</div>
<div style="position:absolute;left:844.8px;top:650.81px;font-size:17px;line-height:17px;font-weight:400;color:#6f737a;letter-spacing:0.162px;white-space:nowrap;">Feb 8th, 2024</div>
<div style="position:absolute;left:101px;top:702.81px;font-size:17px;line-height:17px;font-weight:400;color:#30343c;letter-spacing:0.500px;white-space:nowrap;">test file</div>
<div style="position:absolute;left:596.5px;top:702.81px;font-size:17px;line-height:17px;font-weight:400;color:#6f737a;letter-spacing:0.147px;white-space:nowrap;">Sherri-Lee Mathers</div>
<div style="position:absolute;left:844.8px;top:702.81px;font-size:17px;line-height:17px;font-weight:400;color:#6f737a;letter-spacing:0.162px;white-space:nowrap;">Feb 8th, 2024</div>
<div style="position:absolute;left:1237px;top:190.21px;font-size:17px;line-height:17px;font-weight:400;color:#3b9a73;letter-spacing:0.109px;white-space:nowrap;">Share Client Portal Link</div>
<div style="position:absolute;left:1237px;top:257.91px;font-size:17px;line-height:17px;font-weight:400;color:#25282e;letter-spacing:0.488px;white-space:nowrap;-webkit-text-stroke:0.62px #25282e;">Contacts</div>
<div style="position:absolute;left:1535.6px;top:257.91px;font-size:17px;line-height:17px;font-weight:400;color:#2b2f38;letter-spacing:0.103px;white-space:nowrap;">Add</div>
<div style="position:absolute;left:1237px;top:319.01px;font-size:17px;line-height:17px;font-weight:400;color:#25282e;letter-spacing:0.495px;white-space:nowrap;-webkit-text-stroke:0.62px #25282e;">Jordan</div>
<div style="position:absolute;left:1310px;top:320.50px;font-size:13px;line-height:13px;font-weight:400;color:#3e4249;letter-spacing:0.070px;white-space:nowrap;">Default</div>
<div style="position:absolute;left:1237px;top:346.91px;font-size:17px;line-height:17px;font-weight:400;color:#3d9a75;letter-spacing:0.341px;white-space:nowrap;">shahram@financial-cents.com</div>
<div style="position:absolute;left:1236px;top:411.21px;font-size:17px;line-height:17px;font-weight:400;color:#2d3038;letter-spacing:0.261px;white-space:nowrap;-webkit-text-stroke:0.62px #2d3038;">Eric Green - Tax Attorney</div>
<div style="position:absolute;left:1236px;top:439.01px;font-size:17px;line-height:17px;font-weight:400;color:#868a91;letter-spacing:0.274px;white-space:nowrap;">Email address not provided</div>
<div style="position:absolute;left:1237px;top:465.81px;font-size:17px;line-height:17px;font-weight:400;color:#1f2227;letter-spacing:0.307px;white-space:nowrap;">Tax Matter issue 2020-2023</div>
<div style="position:absolute;left:1237px;top:531.11px;font-size:17px;line-height:17px;font-weight:400;color:#2d3038;letter-spacing:0.470px;white-space:nowrap;-webkit-text-stroke:0.62px #2d3038;">Abdullah</div>
<div style="position:absolute;left:1237px;top:558.41px;font-size:17px;line-height:17px;font-weight:400;color:#3d9a75;letter-spacing:0.315px;white-space:nowrap;">abdullah@financial-cents.com</div>
<div style="position:absolute;left:1237.3px;top:635.21px;font-size:17px;line-height:17px;font-weight:400;color:#25282e;letter-spacing:0.424px;white-space:nowrap;-webkit-text-stroke:0.62px #25282e;">About</div>
<div style="position:absolute;left:1535.8px;top:635.21px;font-size:17px;line-height:17px;font-weight:400;color:#2b2f38;letter-spacing:0.077px;white-space:nowrap;">Edit</div>
<div style="position:absolute;left:1232.7px;top:686.91px;font-size:17px;line-height:17px;font-weight:400;color:#25282e;letter-spacing:0.020px;white-space:nowrap;-webkit-text-stroke:0.62px #25282e;">Tax ID#</div>
<div style="position:absolute;left:1451px;top:686.91px;font-size:17px;line-height:17px;font-weight:400;color:#2f3239;letter-spacing:0.267px;white-space:nowrap;">06-2938822</div>
<div style="position:absolute;left:1231.7px;top:733.31px;font-size:17px;line-height:17px;font-weight:400;color:#25282e;letter-spacing:0.436px;white-space:nowrap;-webkit-text-stroke:0.62px #25282e;">Entity Type</div>
<div style="position:absolute;left:1450px;top:733.31px;font-size:17px;line-height:17px;font-weight:400;color:#2f3239;letter-spacing:-0.705px;white-space:nowrap;">LLC</div>
</div></body></html>
